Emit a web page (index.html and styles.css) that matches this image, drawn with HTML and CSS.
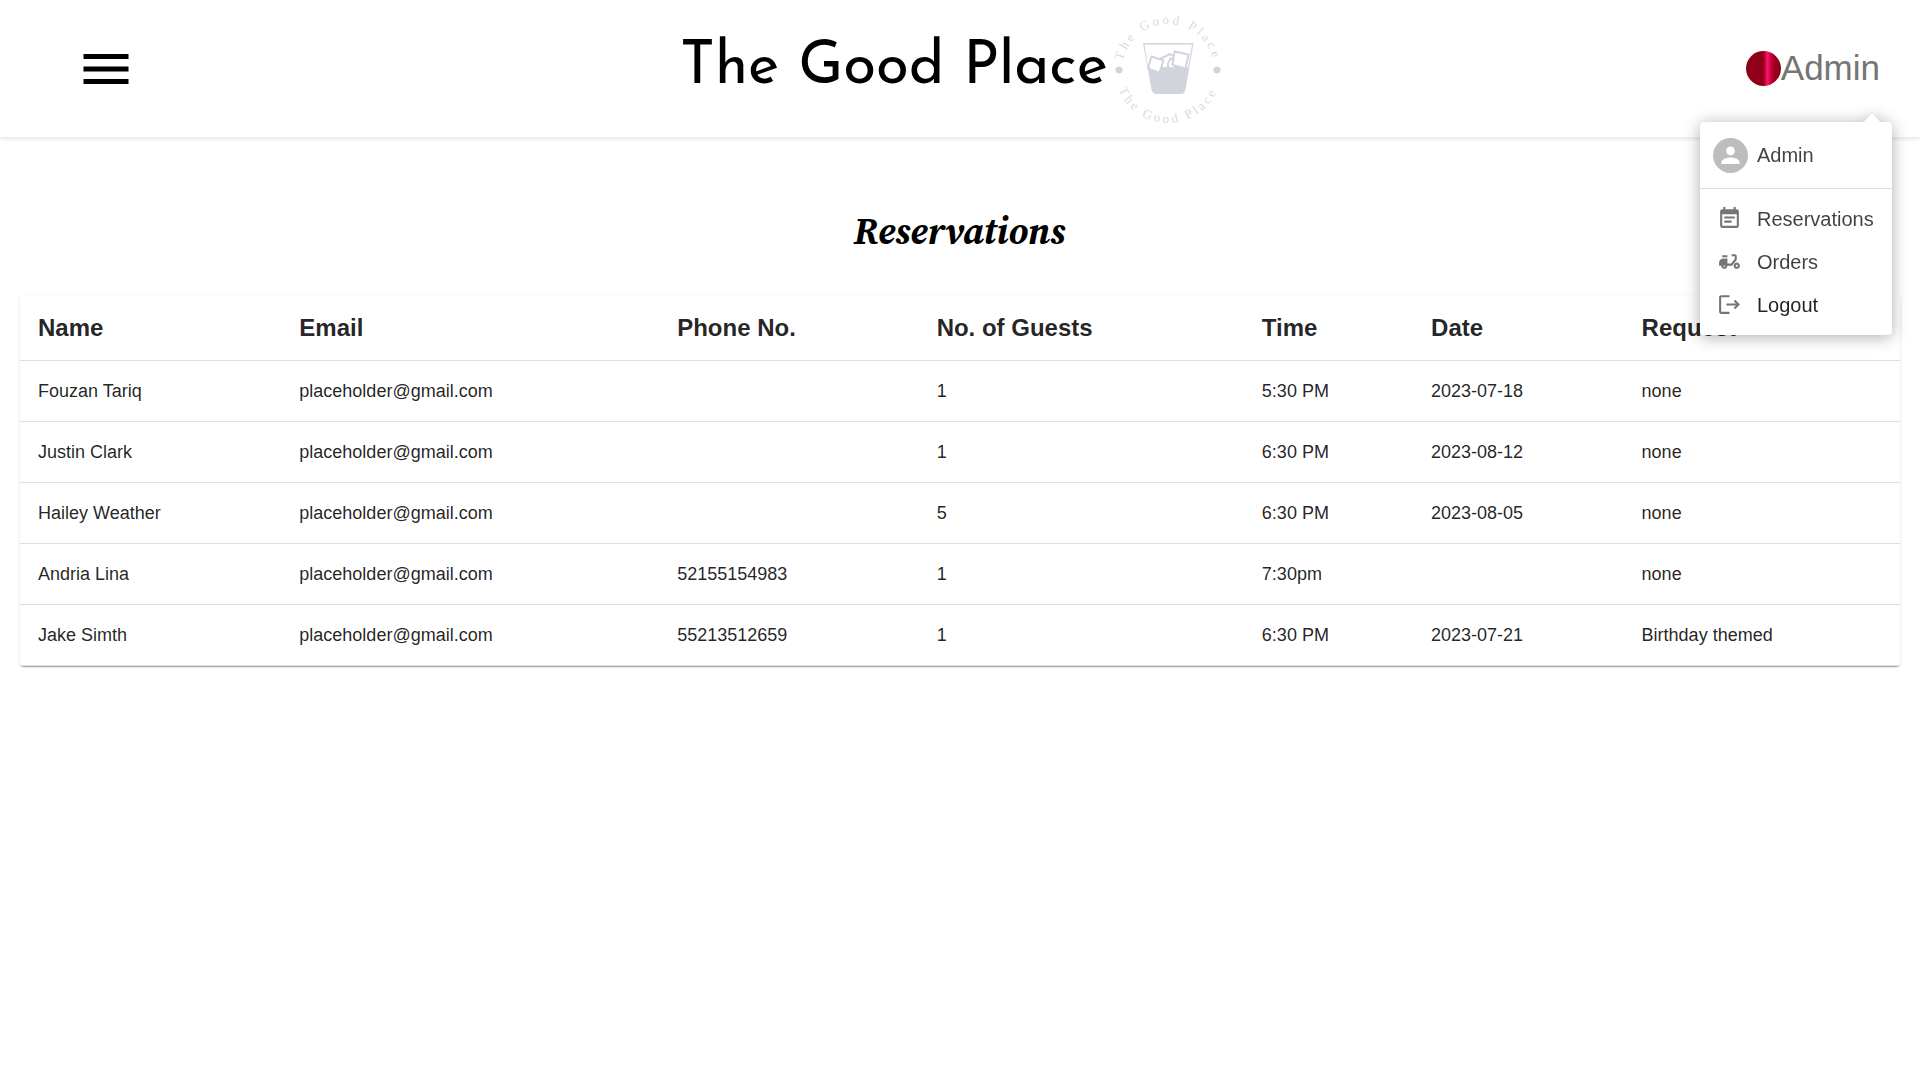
FILE: index.html
```html
<!DOCTYPE html>
<html lang="en">
<head>
<meta charset="utf-8">
<meta name="viewport" content="width=device-width, initial-scale=1">
<title>The Good Place</title>
<link rel="stylesheet" href="styles.css">
</head>
<body>
<header class="header">
  <button class="menu-toggle" type="button" aria-label="Open navigation">
    <svg viewBox="0 0 24 24" width="60" height="60"><path d="M3 18h18v-2H3v2zm0-5h18v-2H3v2zm0-7v2h18V6H3z"/></svg>
  </button>
  <a class="brand" href="#">
    <span class="brand-name">The Good Place</span>
    <svg class="brand-logo" viewBox="0 -1 136 136" width="136" height="136" aria-hidden="true">
      <defs>
        <path id="arc-top" d="M22 68a46 46 0 0 1 92 0"/>
        <path id="arc-bottom" d="M15 68a53 53 0 0 0 106 0"/>
      </defs>
      <g class="logo-text">
        <text><textPath href="#arc-top" startOffset="50%" text-anchor="middle">The Good Place</textPath></text>
        <text><textPath href="#arc-bottom" startOffset="50%" text-anchor="middle">The Good Place</textPath></text>
      </g>
      <g fill="#d0d4dd">
        <circle cx="19" cy="68" r="3.500"/>
        <circle cx="117" cy="68" r="3.500"/>
        <path fill-rule="evenodd" d="M43 41h50.500l-8 46.500q-1 4.500-5 4.500H56.500q-4 0-5-4.500zM44.500 42.500l3.600 23h40L92 42.500z"/>
      </g>
      <g fill="#fff" stroke="#d0d4dd" stroke-width="2" stroke-linejoin="round">
        <path d="M60 57l10-5 8 5v9H62z"/>
        <path d="M68 65q-1-4 3-9 6 6 4 9-3 3-7 0z"/>
        <path d="M74.500 49.500l14 3-3 14-13-3.500z"/>
        <path d="M51.500 54.500l12 4-4 12.500-11.500-4.500z"/>
      </g>
    </svg>
  </a>
  <div class="account">
    <button class="account-toggle" type="button" aria-haspopup="true" aria-expanded="true">
      <span class="account-picture"></span>Admin
    </button>
    <nav class="account-menu" aria-label="Account">
      <a class="menu-item profile" href="#">
        <svg class="avatar" viewBox="0 0 35 35" width="35" height="35"><circle cx="17.500" cy="17.500" r="17.500" fill="#bdbdbd"/><path fill="#fff" d="M17.500 17.200a4.400 4.400 0 1 0 0-8.800 4.400 4.400 0 0 0 0 8.800zm0 2.200c-3 0-9 1.500-9 4.400V26h18v-2.200c0-2.900-6-4.400-9-4.400z"/></svg>
        Admin
      </a>
      <hr class="divider">
      <a class="menu-item" href="#">
        <svg class="icon" viewBox="0 0 24 24" width="25" height="25"><path d="M17 10H7v2h10v-2zm2-7h-1V1h-2v2H8V1H6v2H5c-1.110 0-1.990.9-1.990 2L3 19c0 1.100.89 2 2 2h14c1.100 0 2-.9 2-2V5c0-1.100-.9-2-2-2zm0 16H5V8h14v11zm-5-5H7v2h7v-2z"/></svg>
        Reservations
      </a>
      <a class="menu-item" href="#">
        <svg class="icon" viewBox="0 0 24 24" width="25" height="25"><path d="M19 7c0-1.100-.9-2-2-2h-3v2h3v2.650L13.520 14H10V9H6c-2.210 0-4 1.790-4 4v3h2c0 1.660 1.340 3 3 3s3-1.340 3-3h4.480L19 10.350V7zM7 17c-.55 0-1-.45-1-1h2c0 .55-.45 1-1 1zM5 6h5v2H5zM19 13c-1.660 0-3 1.340-3 3s1.340 3 3 3 3-1.340 3-3-1.340-3-3-3zm0 4c-.55 0-1-.45-1-1s.45-1 1-1 1 .45 1 1-.45 1-1 1z"/></svg>
        Orders
      </a>
      <button class="menu-item logout" type="button">
        <svg class="icon" viewBox="0 0 24 24" width="25" height="25"><path d="M17.500 7.500l-1.410 1.410L18.170 11H9v2h9.170l-2.080 2.090 1.410 1.410L22 12zM4 5h8V3H4c-1.100 0-2 .9-2 2v14c0 1.100.9 2 2 2h8v-2H4V5z"/></svg>
        Logout
      </button>
    </nav>
  </div>
</header>
<main class="content">
  <h1 class="page-title">Reservations</h1>
  <div class="paper">
    <table class="table">
      <colgroup>
        <col class="col-name"><col class="col-email"><col class="col-phone"><col class="col-guests"><col class="col-time"><col class="col-date"><col>
      </colgroup>
      <thead>
        <tr><th scope="col">Name</th><th scope="col">Email</th><th scope="col">Phone No.</th><th scope="col">No. of Guests</th><th scope="col">Time</th><th scope="col">Date</th><th scope="col">Request</th></tr>
      </thead>
      <tbody>
        <tr><td>Fouzan Tariq</td><td>placeholder@gmail.com</td><td></td><td>1</td><td>5:30 PM</td><td>2023-07-18</td><td>none</td></tr>
        <tr><td>Justin Clark</td><td>placeholder@gmail.com</td><td></td><td>1</td><td>6:30 PM</td><td>2023-08-12</td><td>none</td></tr>
        <tr><td>Hailey Weather</td><td>placeholder@gmail.com</td><td></td><td>5</td><td>6:30 PM</td><td>2023-08-05</td><td>none</td></tr>
        <tr><td>Andria Lina</td><td>placeholder@gmail.com</td><td>52155154983</td><td>1</td><td>7:30pm</td><td></td><td>none</td></tr>
        <tr><td>Jake Simth</td><td>placeholder@gmail.com</td><td>55213512659</td><td>1</td><td>6:30 PM</td><td>2023-07-21</td><td>Birthday themed</td></tr>
      </tbody>
    </table>
  </div>
</main>
</body>
</html>
```
FILE: styles.css
```css
* { box-sizing: border-box; }

body {
  margin: 0;
  background: #fff;
  color: rgba(0, 0, 0, 0.87);
  font-family: "Liberation Sans", Arial, sans-serif;
}

button {
  border: 0;
  background: none;
  font: inherit;
  cursor: pointer;
}

a { color: inherit; text-decoration: none; }
svg { display: block; flex: none; }

.header {
  display: grid;
  grid-template-columns: 1fr auto 1fr;
  align-items: center;
  height: 137px;
  padding: 0 40px 0 76px;
  box-shadow: 0 2px 4px rgba(0, 0, 0, 0.1);
}

.menu-toggle {
  justify-self: start;
  padding: 0;
}

.brand {
  display: flex;
  align-items: center;
  margin-right: 40px;
  color: #000;
}

.brand-name {
  padding-bottom: 2px;
  font-family: "Josefin Sans", Lato, sans-serif;
  font-size: 60px;
  line-height: 80px;
}

.brand-logo { margin-left: -8px; }

.logo-text {
  fill: #d8dbe2;
  font-family: "Liberation Serif", serif;
  font-size: 13px;
  letter-spacing: 3px;
}

.account {
  position: relative;
  justify-self: end;
}

.account-toggle {
  display: flex;
  align-items: center;
  padding: 0 0 1px;
  color: #757575;
  font-size: 35px;
  line-height: 38px;
}

.account-picture {
  width: 35px;
  height: 35px;
  border-radius: 50%;
  background: linear-gradient(90deg, #8f0018 0 48%, #a80028 52%, #e80e58 58%, #f01c66 62%, #d80848 68%, #c00038 74%, #98001c 82%, #8a0016);
}

.account-menu {
  position: absolute;
  top: 73px;
  right: -12px;
  z-index: 2;
  width: 192px;
  padding: 8px 0 9px;
  border-radius: 4px;
  background: #fff;
  filter: drop-shadow(0 2px 8px rgba(0, 0, 0, 0.32));
}

.account-menu::before {
  content: "";
  position: absolute;
  top: -6px;
  right: 14px;
  width: 12px;
  height: 12px;
  background: #fff;
  transform: rotate(45deg);
}

.menu-item {
  display: flex;
  align-items: center;
  width: 100%;
  height: 43px;
  padding: 0 17px;
  color: rgba(0, 0, 0, 0.75);
  font-size: 20px;
  line-height: 30px;
}

.profile { height: 50px; }
.logout { color: rgba(0, 0, 0, 0.87); }
.avatar { margin: 0 9px 0 -4px; }

.icon {
  margin-right: 15px;
  fill: #757575;
}

.divider {
  margin: 8px 0;
  border: 0;
  border-top: 1px solid #e0e0e0;
}

.content { padding: 64px 20px 20px; }

.page-title {
  margin: 0 0 34px;
  color: #000;
  font-family: "Source Serif 4", "Liberation Serif", serif;
  font-size: 37px;
  font-style: italic;
  font-weight: 700;
  line-height: 60px;
  text-align: center;
}

.paper {
  border-radius: 4px;
  box-shadow: 0 2px 1px -1px rgba(0, 0, 0, 0.2), 0 1px 1px rgba(0, 0, 0, 0.14), 0 1px 3px rgba(0, 0, 0, 0.12);
}

.table {
  width: 100%;
  border-collapse: collapse;
  table-layout: fixed;
  text-align: left;
}

.col-name { width: 13.9%; }
.col-email { width: 20.1%; }
.col-phone { width: 13.8%; }
.col-guests { width: 17.3%; }
.col-time { width: 9%; }
.col-date { width: 11.2%; }

.table th,
.table td {
  padding: 16px 18px;
  border-bottom: 1px solid #e0e0e0;
}

.table th {
  font-size: 24px;
  line-height: 33px;
}

.table td {
  height: 61px;
  font-size: 18px;
  line-height: 28px;
}
```
